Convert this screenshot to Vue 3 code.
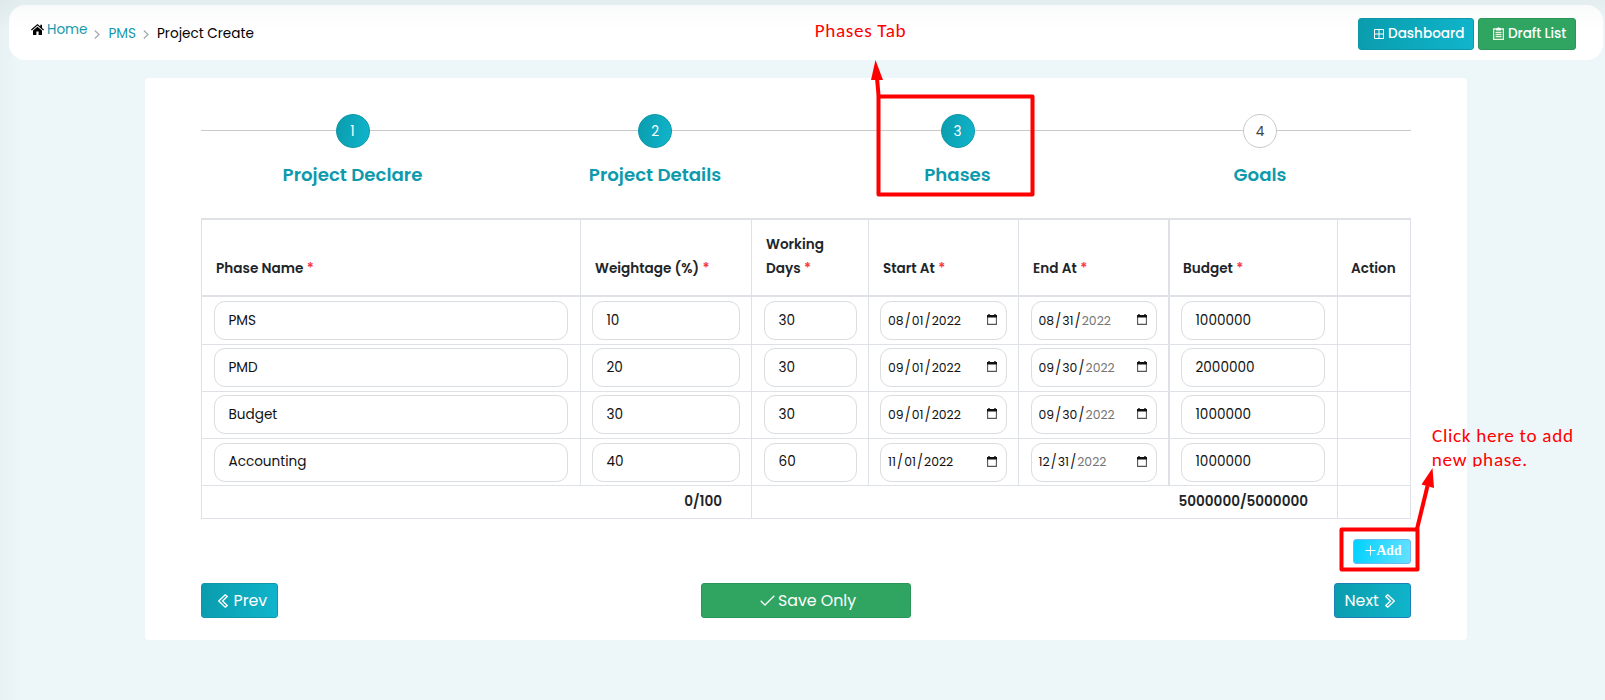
<script setup>
const steps = [
  { no: 1, title: 'Project Declare', done: true },
  { no: 2, title: 'Project Details', done: true },
  { no: 3, title: 'Phases', done: true },
  { no: 4, title: 'Goals', done: false },
]

const columns = [
  { lines: ['Phase Name'], required: true },
  { lines: ['Weightage (%)'], required: true },
  { lines: ['Working', 'Days'], required: true },
  { lines: ['Start At'], required: true },
  { lines: ['End At'], required: true },
  { lines: ['Budget'], required: true },
  { lines: ['Action'], required: false },
]

const phases = [
  { name: 'PMS', weight: '10', days: '30', start: ['08', '01', '2022'], end: ['08', '31', '2022'], budget: '1000000' },
  { name: 'PMD', weight: '20', days: '30', start: ['09', '01', '2022'], end: ['09', '30', '2022'], budget: '2000000' },
  { name: 'Budget', weight: '30', days: '30', start: ['09', '01', '2022'], end: ['09', '30', '2022'], budget: '1000000' },
  { name: 'Accounting', weight: '40', days: '60', start: ['11', '01', '2022'], end: ['12', '31', '2022'], budget: '1000000' },
]
</script>

<template>
  <div class="page">
    <header class="topbar">
      <nav class="crumbs">
        <a class="home">
          <svg class="i-home" viewBox="0 0 13 11">
            <path d="M6.5 0 0 5.6l.8.9 5.7-4.9 5.7 4.9.8-.9-2-1.7V.7H9.3v1.7z" />
            <path d="M6.5 2.7 2 6.5V11h3.4V7.6h2.2V11H11V6.5z" />
          </svg>
          <span class="home-text">Home</span>
        </a>
        <svg class="i-sep s1" viewBox="0 0 6 9"><path d="M.8.6 5 4.5.8 8.4" /></svg>
        <a class="pms">PMS</a>
        <svg class="i-sep" viewBox="0 0 6 9"><path d="M.8.6 5 4.5.8 8.4" /></svg>
        <span class="current">Project Create</span>
      </nav>
      <div class="actions">
        <button class="btn teal dash">
          <svg class="i-grid" viewBox="0 0 10 10"><path d="M.5.5h9v9h-9zM5 .5v9M.5 5h9" /></svg>
          <span>Dashboard</span>
        </button>
        <button class="btn green draft">
          <svg class="i-clip" viewBox="0 0 11 13">
            <path class="board" d="M.6 2h9.8v10.4H.6z" />
            <path class="fill" d="M3 1.2h1.5a1 1 0 0 1 2 0H8v2.4H3z" />
            <path class="lines" d="M2.5 5.3h6M2.5 7.4h6M2.5 9.5h6" />
          </svg>
          <span>Draft List</span>
        </button>
      </div>
    </header>

    <main class="card">
      <ol class="steps">
        <li v-for="s in steps" :key="s.no" class="step">
          <span class="dot" :class="{ done: s.done }">{{ s.no }}</span>
          <span class="title">{{ s.title }}</span>
        </li>
      </ol>

      <section class="table">
        <div class="row head">
          <div v-for="c in columns" :key="c.lines[0]" class="cell th">
            <div v-for="(line, i) in c.lines" :key="line" class="th-line">
              <span>{{ line }}</span>
              <span v-if="c.required && i === c.lines.length - 1" class="star">*</span>
            </div>
          </div>
        </div>
        <div v-for="p in phases" :key="p.name" class="row body">
          <div class="cell wide"><div class="field">{{ p.name }}</div></div>
          <div class="cell"><div class="field">{{ p.weight }}</div></div>
          <div class="cell left"><div class="field">{{ p.days }}</div></div>
          <div v-for="kind in ['start', 'end']" :key="kind" class="cell" :class="{ left: kind === 'end' }">
            <div class="field date" :class="kind">
              <span>{{ p[kind][0] }}</span><s>/</s><span>{{ p[kind][1] }}</span><s>/</s><span class="year">{{ p[kind][2] }}</span>
              <svg class="i-cal" viewBox="0 0 10 11">
                <path class="box" d="M.6 1.8h8.8v8.6H.6z" />
                <path class="bar" d="M0 1h1.3V0h1.4v1h4.6V0h1.4v1H10v2.6H0z" />
              </svg>
            </div>
          </div>
          <div class="cell budget"><div class="field">{{ p.budget }}</div></div>
          <div class="cell"></div>
        </div>
        <div class="row foot">
          <div class="cell total">0/100</div>
          <div class="cell total">5000000/5000000</div>
          <div class="cell"></div>
        </div>
      </section>

      <div class="addline">
        <button class="add">
          <svg class="i-plus" viewBox="0 0 11 11"><path d="M5.5 .5v10M.5 5.5h10" /></svg>
          <span>Add</span>
        </button>
      </div>

      <div class="footer">
        <button class="btn teal nav prev">
          <svg class="i-chev" viewBox="0 0 10 14"><path d="M7.3.8.8 7l6.5 6.2 1.9-1.7L4.6 7l4.6-4.5z" /></svg>
          <span>Prev</span>
        </button>
        <button class="btn green nav save">
          <svg class="i-check" viewBox="0 0 15 11"><path d="M.7 5.8 5 10 14.3.8" /></svg>
          <span>Save Only</span>
        </button>
        <button class="btn teal nav next">
          <span>Next</span>
          <svg class="i-chev" viewBox="0 0 10 14"><path d="M2.7.8 9.2 7l-6.5 6.2-1.9-1.7L5.4 7 .8 2.5z" /></svg>
        </button>
      </div>
    </main>

    <svg class="notes" viewBox="0 0 1605 700">
      <defs>
        <clipPath id="note-clip"><rect x="1425" y="420" width="170" height="46.7" /></clipPath>
      </defs>
      <text x="814.7" y="37" textLength="91">Phases Tab</text>
      <rect x="878.5" y="96.5" width="154" height="98" />
      <path class="line" d="M878.6 96 877 78" />
      <path class="tip" d="M875.5 60 871 80h12z" />
      <g clip-path="url(#note-clip)">
        <text x="1432" y="442" textLength="141">Click here to add</text>
        <text x="1431.7" y="466" textLength="95.5">new phase.</text>
      </g>
      <rect x="1341.5" y="529.5" width="76" height="40" />
      <path class="line" d="M1417 529 1427.5 486" />
      <path class="tip" d="M1432.5 468 1421.5 484.5 1434 488z" />
    </svg>
  </div>
</template>

<style>
body {
  margin: 0;
  background: #edf6f8;
}
</style>

<style scoped>
.page {
  position: relative;
  box-sizing: border-box;
  width: 1605px;
  height: 700px;
  padding: 5px 2px 0 9px;
  overflow: hidden;
  font-family: Poppins, Inter, "Liberation Sans", sans-serif;
  font-feature-settings: "cv11" 1;
  color: #212529;
  background:
    linear-gradient(90deg, rgba(60, 80, 90, 0.03), rgba(60, 80, 90, 0) 22px),
    linear-gradient(180deg, rgba(60, 80, 90, 0.05) 4px, rgba(60, 80, 90, 0) 30px),
    #edf6f8;
}
svg {
  flex: none;
  display: block;
}
.topbar {
  display: flex;
  justify-content: space-between;
  align-items: center;
  box-sizing: border-box;
  height: 55px;
  padding: 0 27px 0 22px;
  border-radius: 16px;
  background: linear-gradient(180deg, #f8fafa, #fdfdfd 14px, #fff 26px);
}
.crumbs {
  display: flex;
  align-items: center;
  height: 20px;
  font-size: 13.6px;
  color: #149aab;
}
.home {
  display: flex;
  align-items: center;
  width: 57px;
  gap: 3px;
  margin-top: -7px;
}
.home-text {
  margin-top: 2px;
}
.i-home {
  width: 13px;
  height: 11px;
  fill: #000;
}
.i-sep {
  width: 6px;
  height: 9px;
  margin-top: 3px;
  fill: none;
  stroke: #a9adb3;
  stroke-width: 1.4;
}
.s1 {
  margin-left: 6px;
}
.pms {
  width: 34px;
  margin-left: 8.5px;
  margin-top: 2px;
}
.current {
  margin: 2px 0 0 8.5px;
  color: #000;
}
.actions {
  display: flex;
  gap: 4px;
  margin-top: 3px;
}
.btn {
  display: flex;
  align-items: center;
  box-sizing: border-box;
  padding: 0;
  border: 1px solid;
  border-radius: 3px;
  font-family: inherit;
  font-feature-settings: inherit;
  font-weight: 400;
  color: #fff;
}
.teal {
  border-color: #0c98a9;
  background: linear-gradient(100deg, #0a9cad, #10b5cc);
}
.green {
  border-color: #2b9659;
  background: #30a562;
}
.dash,
.draft {
  height: 32px;
  padding-bottom: 1px;
  font-size: 13.6px;
  font-weight: 500;
}
.dash {
  width: 116px;
  padding-left: 15px;
  gap: 4px;
}
.draft {
  width: 98px;
  padding-left: 14px;
  gap: 4px;
  letter-spacing: -0.1px;
}
.i-grid {
  width: 10px;
  height: 10px;
  fill: none;
  stroke: #fff;
  stroke-width: 1;
}
.i-clip {
  width: 11px;
  height: 13px;
}
.i-clip .board,
.i-clip .lines {
  fill: none;
  stroke: #e9f6dd;
  stroke-width: 1.3;
}
.i-clip .fill {
  fill: #fff;
}
.card {
  box-sizing: border-box;
  width: 1322px;
  height: 562px;
  margin: 18px 0 0 136px;
  padding: 36px 56px 0;
  border-radius: 4px;
  background: #fff;
}
.steps {
  display: flex;
  height: 104px;
  margin: 0;
  padding: 0;
  list-style: none;
  background: linear-gradient(#c9c9c9, #c9c9c9) 0 16px / 100% 1px no-repeat;
}
.step {
  flex: 1;
  display: flex;
  flex-direction: column;
  align-items: center;
}
.dot {
  box-sizing: border-box;
  width: 34px;
  height: 34px;
  margin-left: 0.6px;
  border: 1px solid #c9c9c9;
  border-radius: 50%;
  background: #fff;
  font-size: 13.6px;
  line-height: 33px;
  text-align: center;
  color: #444;
}
.dot.done {
  border-color: #0c98a9;
  background: linear-gradient(100deg, #0a9cad, #10b5cc);
  color: #fff;
}
.title {
  margin: 14px 0 0 0.5px;
  font-size: 18.2px;
  font-weight: 600;
  line-height: 26px;
  color: #0c9aac;
}
.table {
  border-top: 2px solid #dee2e6;
}
.row {
  display: grid;
  grid-template-columns: 379px 171px 117px 150px 150px 169px 74px;
  box-sizing: border-box;
  border-right: 1px solid #dee2e6;
  border-bottom: 1px solid #dee2e6;
}
.cell {
  box-sizing: border-box;
  padding: 3px 11px 0;
  border-left: 1px solid #dee2e6;
}
.head {
  height: 77px;
  border-bottom-width: 2px;
}
.head .cell:nth-child(6),
.budget {
  border-left-width: 2px;
}
.th {
  display: flex;
  flex-direction: column;
  justify-content: flex-end;
  padding: 0 10px 14px 14px;
  font-size: 13.6px;
  font-weight: 600;
  line-height: 24px;
}
.th:nth-child(n + 6) {
  padding-left: 13px;
}
.th-line {
  display: flex;
  gap: 3.5px;
  white-space: nowrap;
}
.star {
  color: #f93a3a;
}
.body {
  height: 47px;
}
.body:nth-child(2) {
  height: 48px;
}
.body:nth-child(2) .cell,
.body:nth-child(5) .cell {
  padding-top: 4px;
}
.body .left {
  padding-left: 12px;
}
.wide {
  padding-left: 12px;
  padding-right: 12px;
}
.budget {
  padding-right: 12px;
}
.field {
  box-sizing: border-box;
  height: 39px;
  padding-left: 13.5px;
  border: 1px solid #dadcde;
  border-radius: 11px;
  font-size: 13.6px;
  line-height: 38px;
  color: #111;
}
.body:nth-child(5) .field {
  line-height: 36px;
}
.date {
  display: flex;
  padding: 0 9px 0 7px;
  font-size: 12.4px;
}
.date s {
  width: 8.2px;
  text-align: center;
  text-decoration: none;
  transform: scaleY(1.15);
}
.date.end {
  padding-left: 6.5px;
}
.end .year {
  color: #757575;
}
.i-cal {
  align-self: center;
  width: 10px;
  height: 11px;
  margin: 0 0 2px auto;
}
.i-cal .box {
  fill: none;
  stroke: #555;
  stroke-width: 1.1;
}
.i-cal .bar {
  fill: #111;
}
.foot {
  grid-template-columns: 550px 586px 74px;
  height: 33px;
}
.total {
  padding: 0 29px 0 0;
  font-size: 13.6px;
  font-weight: 600;
  line-height: 32px;
  text-align: right;
}
.addline {
  display: flex;
  justify-content: flex-end;
  margin-top: 20px;
}
.add {
  display: flex;
  align-items: center;
  gap: 1px;
  box-sizing: border-box;
  width: 58px;
  height: 25px;
  padding: 0 0 2px 10.5px;
  border: 1px solid #6cb8f0;
  border-radius: 3px;
  background: linear-gradient(100deg, #00d2ff, #66e0ff);
  font: bold 13.6px "Liberation Serif", serif;
  color: #fff;
}
.i-plus {
  width: 11px;
  height: 11px;
  fill: none;
  stroke: #fff;
  stroke-width: 1;
}
.footer {
  display: flex;
  justify-content: space-between;
  margin-top: 19px;
}
.nav {
  height: 35px;
  font-size: 15.8px;
}
.prev {
  width: 77px;
  padding-left: 16px;
  gap: 5.5px;
}
.save {
  width: 210px;
  padding-left: 58px;
  gap: 3px;
}
.next {
  width: 77px;
  padding-left: 9.5px;
  gap: 6.5px;
  border-color: #1c7fb5;
}
.i-chev {
  width: 10px;
  height: 14px;
  fill: none;
  stroke: #fff;
  stroke-width: 1.3;
}
.i-check {
  width: 15px;
  height: 11px;
  fill: none;
  stroke: #fff;
  stroke-width: 1.3;
}
.notes {
  position: absolute;
  left: 0;
  top: 0;
  width: 1605px;
  height: 700px;
  pointer-events: none;
}
.notes text {
  fill: #f00;
  font-family: Carlito, Calibri, "Open Sans", sans-serif;
  font-size: 19.2px;
}
.notes rect {
  fill: none;
  stroke: #f00;
  stroke-width: 4;
  stroke-linejoin: round;
}
.notes .line {
  stroke: #f00;
  stroke-width: 4;
}
.notes .tip {
  fill: #f00;
}
</style>
